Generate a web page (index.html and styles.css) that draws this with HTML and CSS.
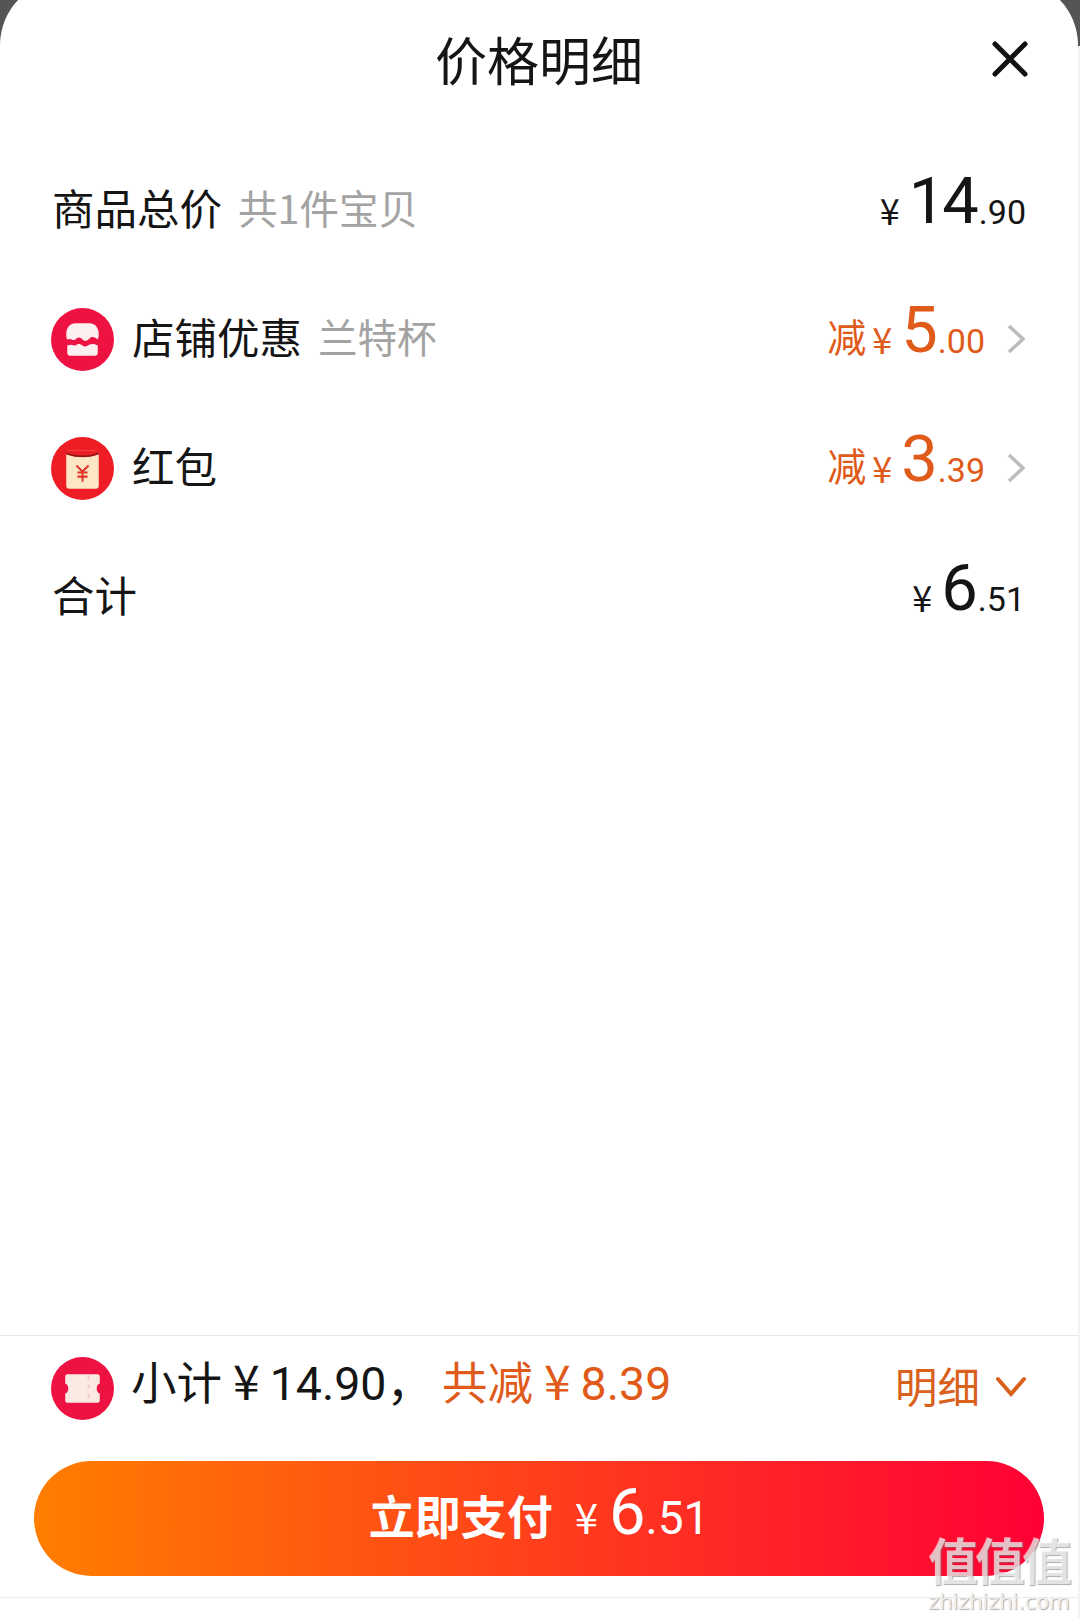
FILE: index.html
```html
<!DOCTYPE html>
<html lang="zh">
<head>
	<meta charset="utf-8">
	<title>价格明细</title>
	<link rel="stylesheet" href="styles.css">
</head>
<body>
<div class="sheet">
	<div class="header">
		<h1 class="title">价格明细</h1>
		<svg class="close" viewBox="0 0 36 36"><path d="M3 3L33 33M33 3L3 33"/></svg>
	</div>

	<div class="rows">
		<div class="row">
			<span class="label">商品总价</span><span class="note">共1件宝贝</span>
			<span class="amount total"><span class="yen">¥</span><span class="big tight">14</span><span class="cents">.90</span></span>
		</div>
		<div class="row">
			<svg class="icon" viewBox="0 0 62 62">
				<circle cx="31" cy="31" r="31" fill="#ee1243"/>
				<path fill="#fdeef0" d="M24 15H38C44 15 47 20 47 26C47 28 46.500 30 46 31C42 28 40 28 38 30C35 33 33 33 31 31C28 28 26 29 24 31C21 33 20 29 16 31C15.500 30 15 28 15 26C15 20 18 15 24 15Z"/>
				<path fill="#fdeef0" d="M16 37C20 35 22 37 24 37C27 35 28 35 31 37C34 39 36 37 38 36C41 35 43 35 46 37V44C46 46 45 47 43 47H19C17 47 16 46 16 44Z"/>
			</svg>
			<span class="label">店铺优惠</span><span class="note">兰特杯</span>
			<span class="amount off"><span class="minus">减</span><span class="yen">¥</span><span class="big">5</span><span class="cents">.00</span></span>
			<svg class="chevron" viewBox="0 0 18 30"><path d="M2 2L16 15L2 28"/></svg>
		</div>
		<div class="row">
			<svg class="icon" viewBox="0 0 62 62">
				<circle cx="31" cy="31" r="31" fill="#ee1c25"/>
				<rect x="15" y="13" width="32" height="38" rx="3" fill="#fde6c4"/>
				<path fill="#ee1c25" d="M15 13H47V17C38 21 24 21 15 17Z"/>
				<path fill="none" stroke="#8c1a16" stroke-width="1.500" d="M15 16C24 20 38 20 47 16"/>
				<path fill="none" stroke="#e0392b" stroke-width="2" d="M25 28L31 34L37 28M31 34V44M26 35H36M26 39H36"/>
			</svg>
			<span class="label">红包</span>
			<span class="amount off"><span class="minus">减</span><span class="yen">¥</span><span class="big">3</span><span class="cents">.39</span></span>
			<svg class="chevron" viewBox="0 0 18 30"><path d="M2 2L16 15L2 28"/></svg>
		</div>
		<div class="row">
			<span class="label">合计</span>
			<span class="amount sum"><span class="yen">¥</span><span class="big">6</span><span class="cents">.51</span></span>
		</div>
	</div>

	<div class="footer">
		<div class="summary">
			<svg class="icon" viewBox="0 0 62 62">
				<circle cx="31" cy="31" r="31" fill="#ee1243"/>
				<path fill="#fbe9e4" d="M16 17H46C47 17 48 18 48 19V26C44 27 44 35 48 36V43C48 44 47 45 46 45H16C15 45 14 44 14 43V36C18 35 18 27 14 26V19C14 18 15 17 16 17Z"/>
				<path fill="none" stroke="#f3c9c4" stroke-width="2" stroke-dasharray="4 5" d="M37 18V44"/>
			</svg>
			<span class="sub">小计<span class="sub-yen">¥</span><span class="sub-num">14.90，</span></span>
			<span class="sub saved">共减<span class="sub-yen">¥</span><span class="sub-num">8.39</span></span>
			<span class="detail">明细</span>
			<svg class="down" viewBox="0 0 30 22"><path d="M2 3L15 18L28 3"/></svg>
		</div>
		<div class="pay-wrap">
			<button class="pay"><span class="pay-text">立即支付</span><span class="pay-yen">¥</span><span class="pay-big">6</span><span class="pay-cents">.51</span></button>
		</div>
	</div>
</div>

<div class="mark">
	<div class="mark-cn">值值值</div>
	<div class="mark-en">zhizhizhi.com</div>
</div>
</body>
</html>
```

FILE: styles.css
```css
html, body {
	margin: 0;
	height: 1618px;
	overflow: hidden;
}

body {
	position: relative;
	font-family: Roboto, "Noto Sans CJK SC", sans-serif;
	color: #151515;
	background: linear-gradient(#555 46px, #f4f4f4 46px);
}

.sheet {
	width: 1078px;
	height: 1638px;
	margin-top: -20px;
	padding-top: 20px;
	box-sizing: border-box;
	background: #fff;
	border-radius: 65px 65px 0 0;
	display: flex;
	flex-direction: column;
}

.header {
	height: 120px;
	flex: none;
	display: flex;
	align-items: center;
	justify-content: center;
	position: relative;
}

.title {
	margin: 0 0 4px 0;
	font-size: 52px;
	font-weight: normal;
	font-family: "Noto Sans CJK SC", sans-serif;
}

.close {
	position: absolute;
	left: 992px;
	top: 41px;
	width: 36px;
	height: 36px;
}

.close path {
	fill: none;
	stroke: #111;
	stroke-width: 5;
	stroke-linecap: round;
}

.rows {
	flex: 1;
	padding-top: 25px;
}

.row {
	height: 129px;
	padding: 0 52px 0 51px;
	display: flex;
	align-items: center;
}

.icon {
	width: 63px;
	height: 63px;
	flex: none;
	margin: 2px 17px 0 0;
}

.label {
	font: 42.5px "Noto Sans CJK SC", sans-serif;
	margin: 0 0 6px 1px;
}

.note {
	font: 39.5px "Noto Sans CJK SC", sans-serif;
	color: #a3a3a3;
	margin: 0 0 6px 16px;
}

.amount {
	margin-left: auto;
	margin-bottom: 15px;
	white-space: nowrap;
}

.yen {
	font: 36px "Noto Sans CJK SC", sans-serif;
	margin-right: 9px;
}

.big {
	font-size: 65px;
	line-height: 1;
	vertical-align: 2px;
}

.tight {
	letter-spacing: -3px;
	margin-right: 3px;
}

.cents {
	font-size: 34px;
	vertical-align: 1px;
}

.off {
	color: #e05a1a;
	margin-right: 22px;
}

.minus {
	font: 39px "Noto Sans CJK SC", sans-serif;
	margin-right: 6px;
	vertical-align: 2px;
}

.sum {
	margin-right: 1px;
}

.chevron {
	width: 18px;
	height: 30px;
	flex: none;
	margin-right: 1px;
}

.chevron path {
	fill: none;
	stroke: #bbb;
	stroke-width: 3.500;
}

.footer {
	flex: none;
	height: 283px;
	box-sizing: border-box;
	border-top: 1px solid #e9e9e9;
}

.summary {
	height: 102px;
	padding: 0 52px 0 51px;
	display: flex;
	align-items: center;
}

.sub {
	font: 45.500px "Noto Sans CJK SC", sans-serif;
	margin: 0 0 16px 0;
	white-space: nowrap;
}

.sub-yen {
	font-size: 48px;
	margin: 0 10px 0 11px;
}

.sub-num {
	font-family: Roboto, "Noto Sans CJK SC", sans-serif;
	font-size: 46.500px;
}

.saved {
	color: #e05a1a;
	margin-left: 9px;
}

.detail {
	font: 42.5px "Noto Sans CJK SC", sans-serif;
	margin: 0 0 6px auto;
	color: #d9611c;
}

.down {
	width: 30px;
	height: 22px;
	margin-left: 16px;
}

.down path {
	fill: none;
	stroke: #d9611c;
	stroke-width: 4;
	stroke-linecap: round;
}

.pay-wrap {
	padding: 23px 34px 0 34px;
	height: 160px;
	box-sizing: border-box;
	border-bottom: 1px solid #ececec;
}

.pay {
	width: 100%;
	height: 115px;
	border: 0;
	padding: 0 0 12px;
	color: #fff;
	border-radius: 58px;
	background: linear-gradient(90deg, #ff7e00, #ff0036);
	font-family: Roboto, "Noto Sans CJK SC", sans-serif;
	display: flex;
	align-items: baseline;
	justify-content: center;
	line-height: 103px;
}

.pay-text {
	font-size: 46px;
	font-weight: 700;
	font-family: "Noto Sans CJK SC", sans-serif;
	margin-right: 22px;
}

.pay-yen {
	font: 42px "Noto Sans CJK SC", sans-serif;
	line-height: 103px;
	margin-right: 11px;
}

.pay-big {
	font-size: 65px;
}

.pay-cents {
	font-size: 46px;
}

/* watermark sits over the corner of the button */
.mark {
	position: absolute;
	left: 928px;
	top: 1530px;
	width: 152px;
	color: rgba(255, 255, 255, 0.66);
	text-shadow: 1px 1px 1px rgba(120, 120, 120, 0.6);
}

.mark-cn {
	font: bold 50px/56px "Noto Sans CJK SC", sans-serif;
	letter-spacing: -3px;
}

.mark-en {
	font: 21.500px/24px "DejaVu Sans", sans-serif;
	margin-top: 4px;
	color: #eee;
	letter-spacing: -0.3px;
}
```
